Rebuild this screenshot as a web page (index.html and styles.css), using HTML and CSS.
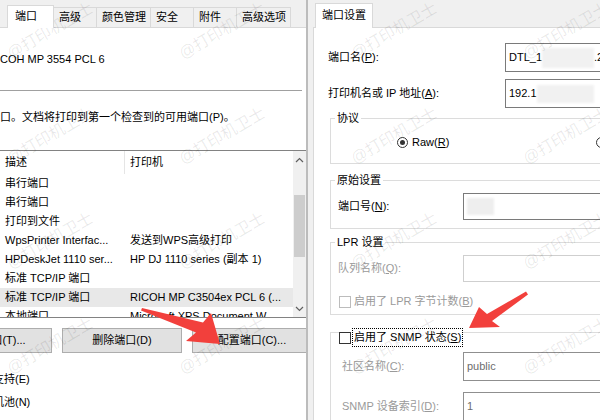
FILE: index.html
```html
<!DOCTYPE html>
<html lang="zh-CN">
<head>
  <meta charset="UTF-8">
  <title>打印机属性 - 端口</title>
  <link rel="stylesheet" href="styles.css">
</head>
<body>

  <div class="screen">

    <!-- 打印机属性：端口页 -->
    <div class="dlg dlg-left">
      <div class="tabs">
        <div class="tab active">端口</div>
        <div class="tab">高级</div>
        <div class="tab">颜色管理</div>
        <div class="tab">安全</div>
        <div class="tab">附件</div>
        <div class="tab">高级选项</div>
      </div>

      <div class="panel">
        <div class="printer-name">RICOH MP 3554 PCL 6</div>
        <div class="sep"></div>
        <div class="hint">打印到下列端口。文档将打印到第一个检查到的可用端口(P)。</div>

        <div class="list">
          <div class="list-main">
            <div class="row head"><span class="c1">描述</span><span class="c2">打印机</span></div>
            <div class="row"><span class="c1">串行端口</span><span class="c2"></span></div>
            <div class="row"><span class="c1">串行端口</span><span class="c2"></span></div>
            <div class="row"><span class="c1">打印到文件</span><span class="c2"></span></div>
            <div class="row"><span class="c1">WpsPrinter Interfac...</span><span class="c2">发送到WPS高级打印</span></div>
            <div class="row"><span class="c1">HPDeskJet 1110 ser...</span><span class="c2">HP DJ 1110 series (副本 1)</span></div>
            <div class="row"><span class="c1">标准 TCP/IP 端口</span><span class="c2"></span></div>
            <div class="row selected"><span class="c1">标准 TCP/IP 端口</span><span class="c2">RICOH MP C3504ex PCL 6 (...</span></div>
            <div class="row"><span class="c1">本地端口</span><span class="c2">Microsoft XPS Document W</span></div>
          </div>
          <div class="vscroll">
            <div class="sb-btn">
              <svg width="9" height="6" viewBox="0 0 9 6"><path d="M1 5 L4.5 1.5 L8 5" fill="none" stroke="#606060" stroke-width="1.2"/></svg>
            </div>
            <div class="sb-track"><div class="sb-thumb"></div></div>
            <div class="sb-btn">
              <svg width="9" height="6" viewBox="0 0 9 6"><path d="M1 1 L4.5 4.5 L8 1" fill="none" stroke="#606060" stroke-width="1.2"/></svg>
            </div>
          </div>
        </div>

        <div class="btn-row">
          <button class="btn btn-add">添加端口(T)...</button>
          <button class="btn">删除端口(D)</button>
          <button class="btn">配置端口(C)...</button>
        </div>

        <div class="opt"><span class="chk"></span>启用双向支持(E)</div>
        <div class="opt"><span class="chk"></span>启用打印机池(N)</div>
      </div>
    </div>

    <!-- 配置标准 TCP/IP 端口监视器 -->
    <div class="dlg dlg-right">
      <div class="tabs">
        <div class="tab active">端口设置</div>
      </div>

      <div class="panel">
        <div class="field">
          <label class="lbl">端口名(<u>P</u>):</label>
          <div class="input">DTL_1<span class="redact r-name"></span>.2</div>
        </div>
        <div class="field">
          <label class="lbl">打印机名或 IP 地址(<u>A</u>):</label>
          <div class="input">192.1<span class="redact r-ip"></span></div>
        </div>

        <fieldset class="group g-proto">
          <legend>协议</legend>
          <div class="radio-row">
            <span class="radio on"></span>Raw(<u>R</u>)
            <span class="radio radio-lpr"></span>LPR(<u>L</u>)
          </div>
        </fieldset>

        <fieldset class="group g-raw">
          <legend>原始设置</legend>
          <div class="field">
            <label class="lbl">端口号(<u>N</u>):</label>
            <div class="input"><span class="redact r-port"></span></div>
          </div>
        </fieldset>

        <fieldset class="group g-lpr">
          <legend>LPR 设置</legend>
          <div class="field off">
            <label class="lbl">队列名称(<u>Q</u>):</label>
            <div class="input input-off"></div>
          </div>
          <div class="check-row off"><span class="chk chk-off"></span>启用了 LPR 字节计数(<u>B</u>)</div>
        </fieldset>

        <fieldset class="group g-snmp">
          <legend><span class="chk"></span><span class="focus">启用了 SNMP 状态(<u>S</u>)</span></legend>
          <div class="field off">
            <label class="lbl">社区名称(<u>C</u>):</label>
            <div class="input input-dim">public</div>
          </div>
          <div class="field off">
            <label class="lbl">SNMP 设备索引(<u>D</u>):</label>
            <div class="input input-dim">1</div>
          </div>
        </fieldset>
      </div>
    </div>

    <!-- 水印 -->
    <div class="watermarks">
      <span>@打印机卫士</span><span>@打印机卫士</span><span>@打印机卫士</span><span>@打印机卫士</span>
      <span>@打印机卫士</span><span>@打印机卫士</span><span>@打印机卫士</span><span>@打印机卫士</span>
      <span>@打印机卫士</span><span>@打印机卫士</span><span>@打印机卫士</span><span>@打印机卫士</span>
      <span>@打印机卫士</span><span>@打印机卫士</span><span>@打印机卫士</span><span>@打印机卫士</span>
    </div>

    <!-- 标注箭头 -->
    <svg class="arrows" width="600" height="420" viewBox="0 0 600 420">
      <polygon points="142,308 203,322.5 211,313 220,344 186,341 196,332.5 141,310.5" />
      <polygon points="526,291.5 487,314 479,307 469,328 500,327 492,321 528,294.5" />
    </svg>

  </div>

</body>
</html>
```

FILE: styles.css
```css
* {
  box-sizing: border-box;
  margin: 0;
  padding: 0;
}

body {
  font-family: "Liberation Sans", "Noto Sans CJK SC", sans-serif;
  font-size: 11px;
  line-height: 15px;
  color: #000;
  background: #fff;
}

.screen {
  position: relative;
  width: 600px;
  height: 420px;
  overflow: hidden;
  display: flex;
}

.dlg {
  background: #f0f0f0;
  overflow: hidden;
  display: flex;
  flex-direction: column;
}

/* ---------- tabs ---------- */

.tabs {
  height: 27px;
  display: flex;
  align-items: flex-end;
  flex: none;
}

.tab {
  height: 20px;
  line-height: 19px;
  min-width: 43px;
  padding: 0 4px 0 5px;
  border-top: 1px solid #d9d9d9;
  border-right: 1px solid #d9d9d9;
  background: #f0f0f0;
  white-space: nowrap;
}

.tab.active {
  position: relative;
  z-index: 1;
  height: 23px;
  line-height: 21px;
  margin-bottom: -1px;
  background: #fff;
  border-left: 1px solid #d9d9d9;
}

.panel {
  flex: 1;
  background: #fff;
  border-top: 1px solid #d9d9d9;
}

/* ---------- left dialog ---------- */

.dlg-left {
  width: 306px;
  flex: none;
}

.dlg-left .tabs {
  padding-left: 7px;
}

.dlg-left .tab.active {
  width: 47px;
  padding-left: 7px;
}

.printer-name {
  margin-top: 24px;
  margin-left: -11px;
  white-space: nowrap;
}

.sep {
  margin-top: 23px;
  margin-right: 4px;
  border-top: 1px solid #a0a0a0;
}

.hint {
  margin-top: 19px;
  margin-left: -66px;
  white-space: nowrap;
}

.list {
  margin-top: 25px;
  height: 168px;
  border-top: 1px solid #828282;
  border-bottom: 1px solid #828282;
  display: flex;
}

.list-main {
  flex: 1;
  overflow: hidden;
}

.row {
  display: flex;
  height: 19px;
  line-height: 19px;
  white-space: nowrap;
}

.row.head {
  height: 23px;
  line-height: 23px;
}

.row.selected {
  background: #e8e8e8;
}

.c1 {
  width: 125px;
  flex: none;
  padding-left: 5px;
  overflow: hidden;
}

.head .c1 {
  border-right: 1px solid #e5e5e5;
}

.c2 {
  padding-left: 5px;
}

.vscroll {
  width: 13px;
  flex: none;
  background: #f0f0f0;
  display: flex;
  flex-direction: column;
}

.sb-btn {
  height: 17px;
  display: flex;
  align-items: center;
  justify-content: center;
}

.sb-track {
  flex: 1;
}

.sb-thumb {
  margin: 27px 1px 0;
  height: 62px;
  background: #cdcdcd;
}

.btn-row {
  margin-top: 10px;
  display: flex;
  gap: 10px;
}

.btn {
  flex: none;
  width: 120px;
  height: 25px;
  font: inherit;
  color: #000;
  background: #e1e1e1;
  border: 1px solid #adadad;
}

.btn-add {
  margin-left: -68px;
}

.opt {
  display: flex;
  align-items: center;
  margin-top: 8px;
  margin-left: -69px;
  white-space: nowrap;
}

.btn-row + .opt {
  margin-top: 19px;
}

.chk {
  display: inline-block;
  width: 12px;
  height: 12px;
  border: 1px solid #333;
  background: #fff;
  flex: none;
}

.opt .chk {
  width: 13px;
  height: 13px;
  margin-right: 5px;
}

/* ---------- right dialog ---------- */

.dlg-right {
  flex: 1;
  border-left: 2px solid #bcbcbc;
  padding-left: 5px;
}

.dlg-right .tab.active {
  height: 25px;
  line-height: 23px;
  margin-left: 2px;
  padding: 0 6px;
}

.dlg-right .panel {
  border-left: 1px solid #d9d9d9;
  padding: 15px 0 0 14px;
}

.field {
  display: flex;
  align-items: center;
  white-space: nowrap;
}

.field + .field {
  margin-top: 7px;
}

.lbl {
  width: 177px;
  flex: none;
}

.input {
  width: 200px;
  height: 29px;
  flex: none;
  display: flex;
  align-items: center;
  padding-left: 3px;
  border: 1px solid #7a7a7a;
  background: #fff;
  white-space: nowrap;
  overflow: hidden;
}

.redact {
  display: inline-block;
  background: #f1f1f1;
  filter: blur(1px);
}

.r-name {
  width: 52px;
  height: 20px;
}

.r-ip {
  width: 57px;
  height: 18px;
}

.r-port {
  width: 27px;
  height: 17px;
  background: #eeeeee;
}

.off {
  color: #9a9a9a;
}

.input-off {
  border-color: #cfcfcf;
}

.input-dim {
  color: #6d6d6d;
  border-color: #8f8f8f;
}

.group {
  margin-left: 2px;
  border: 1px solid #dcdcdc;
  padding: 0 0 0 7px;
}

.group legend {
  margin-left: -3px;
  padding: 0 2px;
  line-height: 15px;
}

.group .lbl {
  width: 125px;
}

.group .input {
  height: 27px;
}

.g-proto {
  margin-top: 3px;
  padding-top: 9px;
  padding-bottom: 13px;
}

.radio-row {
  display: flex;
  align-items: center;
  white-space: nowrap;
}

.radio {
  width: 11px;
  height: 11px;
  border: 1px solid #333;
  border-radius: 50%;
  margin: 0 4px 0 59px;
  display: flex;
  align-items: center;
  justify-content: center;
  flex: none;
}

.radio.on::after {
  content: "";
  width: 5px;
  height: 5px;
  border-radius: 50%;
  background: #333;
}

.radio.radio-lpr {
  margin-left: 147px;
}

.g-raw {
  margin-top: 9px;
  padding-top: 5px;
  padding-bottom: 8px;
}

.g-lpr {
  margin-top: 6px;
  padding-top: 5px;
  padding-bottom: 5px;
}

.check-row {
  margin-top: 12px;
  display: flex;
  align-items: center;
  white-space: nowrap;
}

.check-row .chk {
  margin: 0 3px 0 1px;
}

.chk-off {
  border-color: #bcbcbc;
}

.g-snmp {
  margin-top: 3px;
  padding: 5px 0 0 11px;
}

.g-snmp legend {
  display: flex;
  align-items: center;
  padding: 10px 0 0;
  margin-left: -3px;
  white-space: nowrap;
}

.g-snmp .lbl {
  width: 121px;
}

.g-snmp .input {
  height: 29px;
}

.g-snmp .field + .field {
  margin-top: 11px;
}

.focus {
  margin-left: 1px;
  padding: 1px 1px;
  border: 1px dotted #000;
}

/* ---------- overlays ---------- */

.watermarks {
  position: absolute;
  left: -36px;
  top: -22px;
  display: grid;
  grid-template-columns: repeat(4, 172px);
  grid-template-rows: repeat(4, 105px);
  pointer-events: none;
}

.watermarks span {
  display: flex;
  align-items: center;
  justify-content: center;
  font-size: 16px;
  color: rgba(0, 0, 0, 0.09);
  transform: rotate(-30deg);
  white-space: nowrap;
}

.arrows {
  position: absolute;
  left: 0;
  top: 0;
  pointer-events: none;
}

.arrows polygon {
  fill: #f2403c;
}
```
